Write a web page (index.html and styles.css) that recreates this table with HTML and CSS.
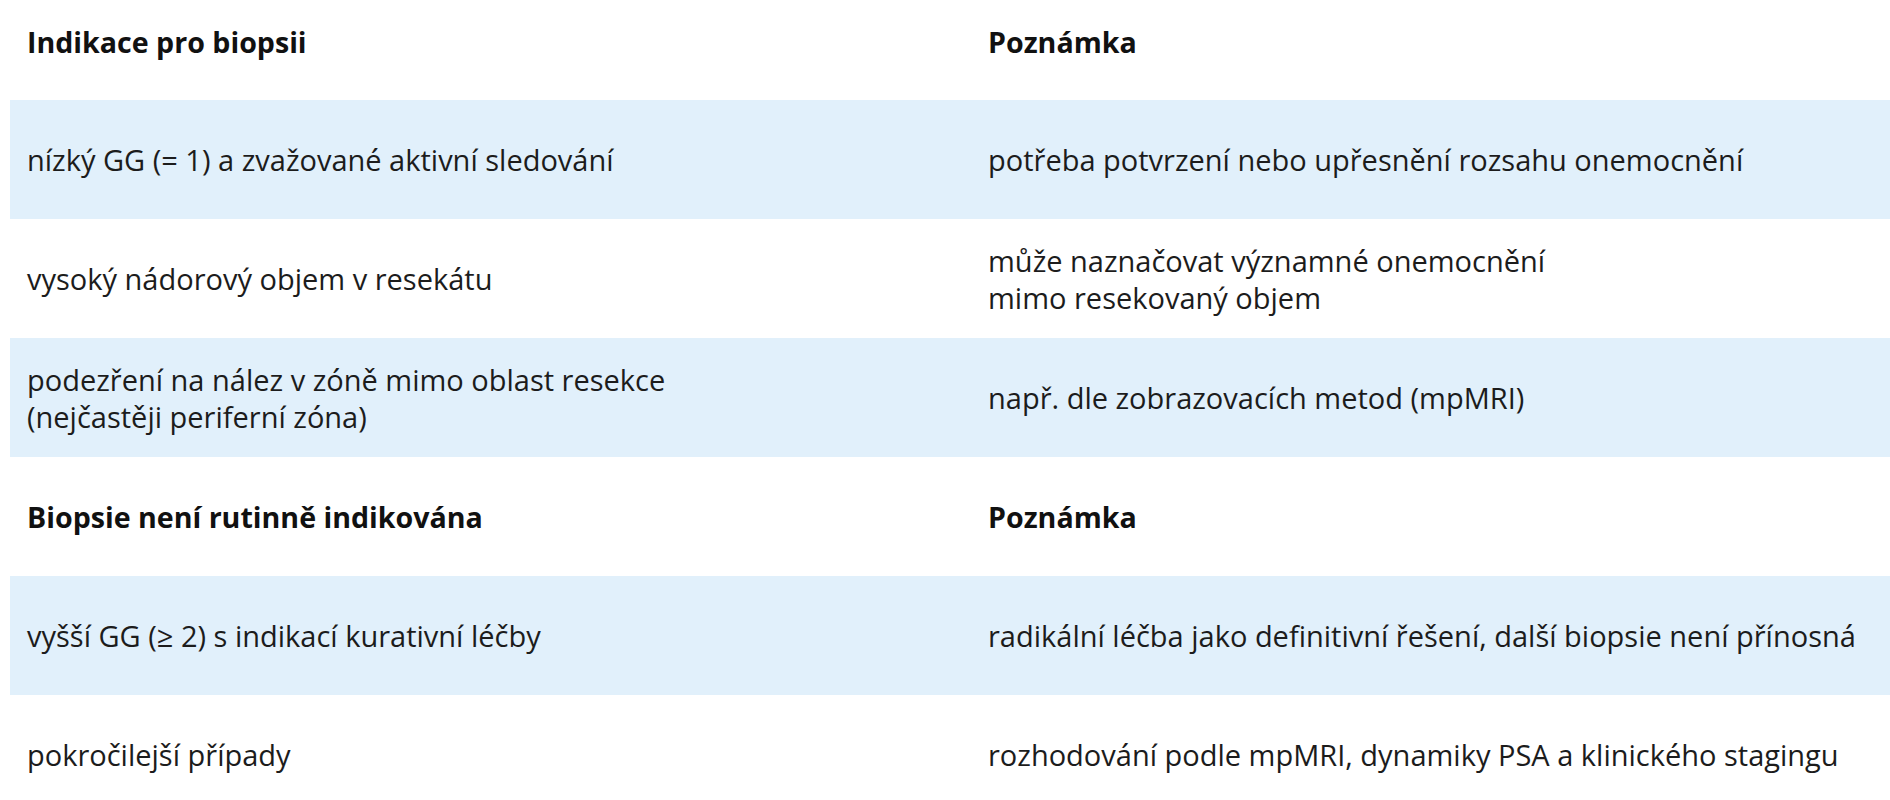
FILE: index.html
```html
<!DOCTYPE html>
<html lang="cs">
<head>
<meta charset="utf-8">
<title>Indikace pro biopsii</title>
<link rel="stylesheet" href="styles.css">
</head>
<body>
<table class="tbl">
  <colgroup><col class="c1"><col class="c2"></colgroup>
  <tr class="head first">
    <th>Indikace pro biopsii</th>
    <th>Poznámka</th>
  </tr>
  <tr class="band">
    <td>nízký GG (= 1) a zvažované aktivní sledování</td>
    <td>potřeba potvrzení nebo upřesnění rozsahu onemocnění</td>
  </tr>
  <tr>
    <td>vysoký nádorový objem v resekátu</td>
    <td>může naznačovat významné onemocnění<br>mimo resekovaný objem</td>
  </tr>
  <tr class="band">
    <td>podezření na nález v zóně mimo oblast resekce<br>(nejčastěji periferní zóna)</td>
    <td>např. dle zobrazovacích metod (mpMRI)</td>
  </tr>
  <tr class="head">
    <th>Biopsie není rutinně indikována</th>
    <th>Poznámka</th>
  </tr>
  <tr class="band">
    <td>vyšší GG (≥ 2) s indikací kurativní léčby</td>
    <td>radikální léčba jako definitivní řešení, další biopsie není přínosná</td>
  </tr>
  <tr>
    <td>pokročilejší případy</td>
    <td>rozhodování podle mpMRI, dynamiky PSA a klinického stagingu</td>
  </tr>
</table>
</body>
</html>
```
FILE: styles.css
```css
html, body {
  margin: 0;
  padding: 0;
  background: #ffffff;
}
body {
  padding-left: 10px;
  font-family: "Open Sans", "Noto Sans", sans-serif;
  color: #1c1c1c;
  overflow: hidden;
}
.tbl {
  width: 1880px;
  border-collapse: collapse;
  table-layout: fixed;
}
.c1 { width: 961px; }
.c2 { width: 919px; }
.tbl td,
.tbl th {
  height: 119px;
  padding: 0 17px;
  vertical-align: middle;
  text-align: left;
  font-size: 29px;
  line-height: 37px;
  box-sizing: border-box;
}
.tbl th {
  font-weight: 700;
  font-size: 28.6px;
  color: #111111;
}
.head.first th {
  height: 100px;
  padding-bottom: 18px;
}
.band td {
  background: #e1f0fb;
}
```
